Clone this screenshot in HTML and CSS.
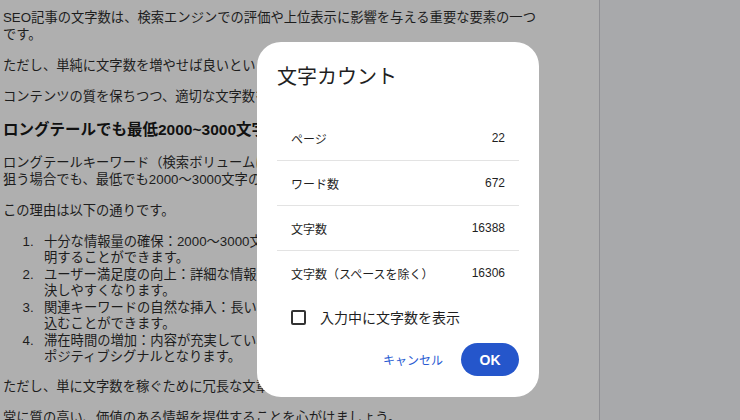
FILE: index.html
```html
<!DOCTYPE html>
<html lang="ja">
<head>
  <meta charset="UTF-8" />
  <meta name="viewport" content="width=device-width, initial-scale=1.0"/>
  <title>文字カウント</title>
  <link rel="stylesheet" href="styles.css">
</head>
<body>

  <div class="doc">
    <div class="page">
      <p>SEO記事の文字数は、検索エンジンでの評価や上位表示に影響を与える重要な要素の一つです。</p>
      <p>ただし、単純に文字数を増やせば良いというわけではありません。</p>
      <p>コンテンツの質を保ちつつ、適切な文字数を目指すことが大切です。</p>
      <h2>ロングテールでも最低2000~3000文字は必要</h2>
      <p>ロングテールキーワード（検索ボリュームは少ないが具体的なニーズを持つ語）を<br>狙う場合でも、最低でも2000〜3000文字の記事を作成することが推奨されます。</p>
      <p>この理由は以下の通りです。</p>
      <ol>
        <li>十分な情報量の確保：2000〜3000文字あれば、トピックについて網羅的に説<br>明することができます。</li>
        <li>ユーザー満足度の向上：詳細な情報を提供することで、ユーザーの悩みを解<br>決しやすくなります。</li>
        <li>関連キーワードの自然な挿入：長い文章の中に、関連キーワードを自然に盛り<br>込むことができます。</li>
        <li>滞在時間の増加：内容が充実していれば、滞在時間が延び、検索エンジンへの<br>ポジティブシグナルとなります。</li>
      </ol>
      <p>ただし、単に文字数を稼ぐために冗長な文章にするのは避けましょう。</p>
      <p>常に質の高い、価値のある情報を提供することを心がけましょう。</p>
    </div>
  </div>
  <div class="side"></div>

  <div class="dialog">
    <h1 class="dialog-title">文字カウント</h1>
    <div class="stats">
      <div class="stat"><span>ページ</span><span>22</span></div>
      <div class="stat"><span>ワード数</span><span>672</span></div>
      <div class="stat"><span>文字数</span><span>16388</span></div>
      <div class="stat"><span>文字数（スペースを除く）</span><span>16306</span></div>
    </div>
    <label class="check">
      <span class="box"></span>
      入力中に文字数を表示
    </label>
    <div class="actions">
      <button class="btn-text">キャンセル</button>
      <button class="btn-ok">OK</button>
    </div>
  </div>

</body>
</html>
```

FILE: styles.css
```css
body {
  margin: 0;
  height: 420px;
  display: flex;
  overflow: hidden;
  font-family: "Liberation Sans", "Noto Sans CJK JP", sans-serif;
  color: #1d1d1d;
}
.doc {
  width: 599px;
  background: #afafaf;
  border-right: 1px solid #909094;
}
.side {
  flex: 1;
  background: #a8a9ab;
}
.page {
  width: 537px;
  padding: 10px 0 0 3px;
  font-size: 13.3px;
  line-height: 16.5px;
}
.page p {
  margin: 0 0 14.5px;
}
.page h2 {
  font-size: 15.5px;
  line-height: 20px;
  margin: 0 0 15.5px;
  color: #111;
}
.page ol {
  margin: 0 0 13px;
  padding-left: 41px;
}
.page li::marker {
  content: counter(list-item) ". \2002";
}

.dialog {
  position: absolute;
  left: 257px;
  top: 42px;
  width: 282px;
  height: 355px;
  box-sizing: border-box;
  padding: 21px 20px 21px;
  background: #fff;
  border-radius: 24px;
  display: flex;
  flex-direction: column;
  font-family: "Liberation Sans", "Noto Sans CJK JP", sans-serif;
  color: #1f1f1f;
}
.dialog-title {
  margin: 0 0 25px;
  font-size: 20px;
  line-height: 28px;
  font-weight: normal;
}
.stat {
  height: 44px;
  padding: 0 14px;
  display: flex;
  align-items: center;
  justify-content: space-between;
  font-size: 12px;
  border-bottom: 1px solid #e3e3e3;
}
.stat:last-child {
  border-bottom: none;
}
.check {
  margin-top: 10px;
  height: 24px;
  padding-left: 14px;
  display: flex;
  align-items: center;
  gap: 14px;
  font-size: 14px;
}
.box {
  width: 11px;
  height: 11px;
  border: 2px solid #333;
  border-radius: 2px;
}
.actions {
  margin-top: 14px;
  display: flex;
  justify-content: flex-end;
  align-items: center;
  gap: 8px;
}
.btn-text {
  background: none;
  border: none;
  padding: 0 10px;
  font-family: inherit;
  font-size: 12px;
  color: #2a5bd2;
}
.btn-ok {
  width: 58px;
  height: 33px;
  border: none;
  border-radius: 17px;
  background: #2556cb;
  color: #fff;
  font-family: inherit;
  font-size: 14px;
  font-weight: bold;
}
```
